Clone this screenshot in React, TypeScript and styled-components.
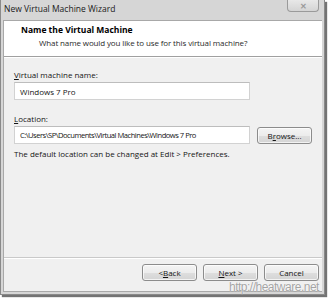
import styled, { createGlobalStyle } from "styled-components";

const GlobalStyle = createGlobalStyle`
  html, body {
    margin: 0;
    padding: 0;
    background: #ffffff;
  }
  body {
    font-family: "Open Sans", "Noto Sans", sans-serif;
    font-size: 8px;
    color: #151515;
  }
`;

const Page = styled.div`
  position: relative;
  width: 329px;
  height: 298px;
  overflow: hidden;
`;

const Window = styled.div`
  width: 319px;
  height: 292px;
  display: flex;
  flex-direction: column;
  background: #d6d6d6;
  border: 1px solid #8a8a8a;
  border-top: none;
  padding: 0 2px 2px 2px;
  box-shadow: 2px 2px 1px rgba(0, 0, 0, 0.55);
`;

const TitleBar = styled.div`
  height: 20px;
  display: flex;
  align-items: flex-start;
  justify-content: space-between;
`;

const Title = styled.div`
  padding: 3px 0 0 1px;
  font-size: 8.5px;
  color: #202020;
`;

const CloseButton = styled.div`
  width: 30px;
  height: 11px;
  margin-right: 3px;
  border: 1px solid #9a9a9a;
  border-top: none;
  border-radius: 0 0 4px 4px;
  background: linear-gradient(#e8e8e8, #d4d4d4);
  display: flex;
  align-items: center;
  justify-content: center;
  font-size: 8px;
  line-height: 1;
  color: #9a9a9a;
  font-weight: bold;
`;

const Client = styled.div`
  flex: 1;
  display: flex;
  flex-direction: column;
  background: #f0f0f0;
  border: 1px solid #a8a8a8;
  border-right: none;
`;

const Header = styled.div`
  height: 36px;
  background: #ffffff;
  border-bottom: 1px solid #a0a0a0;
  box-shadow: 0 1px 0 #ffffff;
  padding: 3px 0 0 17px;
  box-sizing: border-box;
`;

const HeaderTitle = styled.div`
  font-weight: bold;
  font-size: 8.5px;
  color: #000;
`;

const HeaderSub = styled.div`
  padding: 2px 0 0 18px;
  color: #2a2a2a;
  letter-spacing: -0.12px;
`;

const Body = styled.div`
  flex: 1;
  padding: 12px 0 0 10px;
  display: flex;
  flex-direction: column;
`;

const Label = styled.div`
  margin-bottom: 2px;
`;

const Row = styled.div`
  display: flex;
  align-items: center;
  gap: 7px;
`;

const TextBox = styled.div<{ $mb?: number }>`
  width: 236px;
  height: 18px;
  box-sizing: border-box;
  background: #fff;
  border: 1px solid #d2d2d2;
  border-top-color: #bdbdbd;
  padding: 0 0 0 5px;
  display: flex;
  align-items: center;
  margin-bottom: ${(p) => p.$mb ?? 0}px;
  white-space: nowrap;
  overflow: hidden;
`;

const Path = styled.span`
  font-size: 7.6px;
  letter-spacing: -0.5px;
`;

const Button = styled.div<{ $w?: number }>`
  width: ${(p) => p.$w ?? 55}px;
  height: 17px;
  box-sizing: border-box;
  border: 1px solid #8c8c8c;
  border-radius: 3px;
  background: linear-gradient(#f4f4f4 0%, #ececec 50%, #dedede 51%, #d4d4d4 100%);
  display: flex;
  align-items: center;
  justify-content: center;
  box-shadow: inset 0 0 0 1px rgba(255, 255, 255, 0.7);
`;

const Note = styled.div`
  margin-top: 4px;
`;

const Footer = styled.div`
  height: 27px;
  border-top: 1px solid #c9c9c9;
  box-shadow: inset 0 1px 0 #ffffff;
  display: flex;
  justify-content: flex-end;
  align-items: flex-start;
  gap: 6px;
  padding: 6px 3px 0 0;
`;

const U = styled.span`
  text-decoration: underline;
`;

const Watermark = styled.div`
  position: absolute;
  left: 229px;
  top: 280px;
  font-family: "Liberation Sans", sans-serif;
  font-size: 12px;
  color: #a4a4a4;
  letter-spacing: -0.5px;
  text-shadow: 0 0 1px #fff, 0 0 1px #fff;
`;

export default function App() {
  return (
    <Page>
      <GlobalStyle />
      <Window>
        <TitleBar>
          <Title>New Virtual Machine Wizard</Title>
          <CloseButton>✕</CloseButton>
        </TitleBar>
        <Client>
          <Header>
            <HeaderTitle>Name the Virtual Machine</HeaderTitle>
            <HeaderSub>What name would you like to use for this virtual machine?</HeaderSub>
          </Header>
          <Body>
            <Label>
              <U>V</U>irtual machine name:
            </Label>
            <TextBox $mb={13}>Windows 7 Pro</TextBox>
            <Label>
              <U>L</U>ocation:
            </Label>
            <Row>
              <TextBox>
                <Path>C:\Users\SP\Documents\Virtual Machines\Windows 7 Pro</Path>
              </TextBox>
              <Button>
                B<U>r</U>owse...
              </Button>
            </Row>
            <Note>The default location can be changed at Edit &gt; Preferences.</Note>
          </Body>
          <Footer>
            <Button>
              &lt; <U>B</U>ack
            </Button>
            <Button>
              <U>N</U>ext &gt;
            </Button>
            <Button>Cancel</Button>
          </Footer>
        </Client>
      </Window>
      <Watermark>http://heatware.net</Watermark>
    </Page>
  );
}
